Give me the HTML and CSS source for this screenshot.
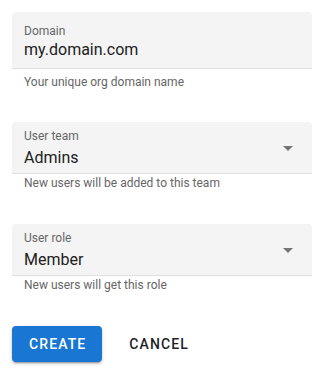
FILE: index.html
```html
<!DOCTYPE html>
<html>
<head>
<meta charset="utf-8">
<link rel="stylesheet" href="styles.css">
</head>
<body>
<form class="form">
  <div class="group">
    <div class="field field-text">
      <div class="content">
        <div class="label">Domain</div>
        <div class="value">my.domain.com</div>
      </div>
    </div>
    <div class="helper helper-text">Your unique org domain name</div>
  </div>
  <div class="group">
    <div class="field field-select">
      <div class="content">
        <div class="label">User team</div>
        <div class="value">Admins</div>
      </div>
      <svg class="arrow" viewBox="0 0 24 24" width="24" height="24"><path d="M7 10l5 5 5-5z"/></svg>
    </div>
    <div class="helper">New users will be added to this team</div>
  </div>
  <div class="group">
    <div class="field field-select">
      <div class="content">
        <div class="label">User role</div>
        <div class="value">Member</div>
      </div>
      <svg class="arrow" viewBox="0 0 24 24" width="24" height="24"><path d="M7 10l5 5 5-5z"/></svg>
    </div>
    <div class="helper">New users will get this role</div>
  </div>
  <div class="actions">
    <button type="button" class="btn btn-primary">Create</button>
    <button type="button" class="btn btn-text">Cancel</button>
  </div>
</form>
</body>
</html>
```
FILE: styles.css
```css
* { box-sizing: border-box; }
html, body { margin: 0; padding: 0; background: #fff; }
body {
  font-family: Roboto, "Liberation Sans", Arial, sans-serif;
  padding: 12px 11px 12px 12px;
}
.form { width: 300px; display: flex; flex-direction: column; }
.group { display: flex; flex-direction: column; margin-bottom: 32px; }
.group + .group { }
.field {
  display: flex;
  background: #f4f4f4;
  border-radius: 4px 4px 0 0;
  border-bottom: 1px solid #e0e0e0;
  padding: 0 12px;
}
.field-text { height: 57px; padding-top: 11px; }
.field-select { height: 52px; padding-top: 6px; padding-right: 12px; }
.content { flex: 1; display: flex; flex-direction: column; }
.label {
  font-size: 12px;
  line-height: 16px;
  color: #666;
}
.value {
  font-size: 16px;
  line-height: 20px;
  color: #212121;
  margin-top: 1px;
}
.field-select .value { margin-top: 4px; }
.arrow { fill: #757575; margin-top: 8px; flex: none; }
.helper {
  font-size: 12px;
  line-height: 16px;
  color: #666;
  padding-left: 12px;
  margin-top: 1px;
}
.helper-text { margin-top: 5px; }
.group:nth-child(2) { margin-bottom: 33px; }
.group:nth-child(3) { margin-bottom: 33px; }
.actions { display: flex; gap: 10px; }
.btn {
  font-family: Roboto, "Liberation Sans", Arial, sans-serif;
  font-size: 14px;
  font-weight: 500;
  letter-spacing: 1.1px;
  text-transform: uppercase;
  height: 36px;
  padding: 0 16px 0 17px;
  border: none;
  border-radius: 4px;
  cursor: pointer;
}
.btn-primary {
  background: #1976d2;
  color: #fff;
  box-shadow: 0 3px 1px -2px rgba(0,0,0,0.2), 0 2px 2px 0 rgba(0,0,0,0.14), 0 1px 5px 0 rgba(0,0,0,0.12);
}
.btn-text { background: transparent; color: #1f1f2a; }
```
